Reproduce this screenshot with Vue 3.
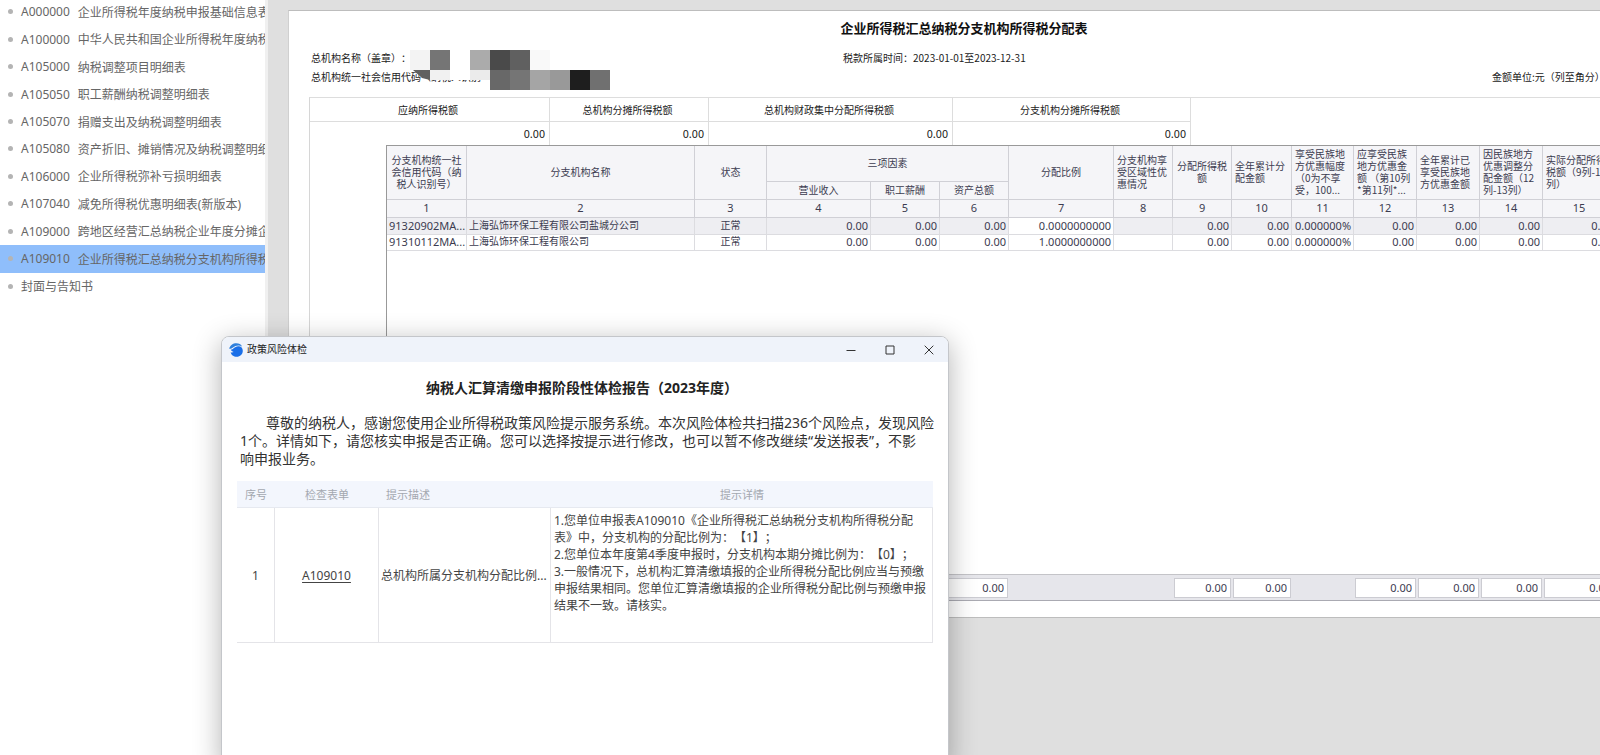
<script setup>
const forms = [
  { code: 'A000000', name: '企业所得税年度纳税申报基础信息表' },
  { code: 'A100000', name: '中华人民共和国企业所得税年度纳税申报表' },
  { code: 'A105000', name: '纳税调整项目明细表' },
  { code: 'A105050', name: '职工薪酬纳税调整明细表' },
  { code: 'A105070', name: '捐赠支出及纳税调整明细表' },
  { code: 'A105080', name: '资产折旧、摊销情况及纳税调整明细表' },
  { code: 'A106000', name: '企业所得税弥补亏损明细表' },
  { code: 'A107040', name: '减免所得税优惠明细表(新版本)' },
  { code: 'A109000', name: '跨地区经营汇总纳税企业年度分摊企业所得税' },
  { code: 'A109010', name: '企业所得税汇总纳税分支机构所得税分配表', active: true },
  { code: '', name: '封面与告知书' },
]

const mosaicTop = ['f3f3f3', '757575', 'ffffff', 'ababab', '4a4a4a', '606060', 'f9f9f9']
const mosaicBottom = ['606060', 'f1f1f1', 'ffffff', 'ebebeb', '686868', '757575', 'a5a5a5', '999999', '1e1e1e', '707070']

const summary = ['应纳所得税额', '总机构分摊所得税额', '总机构财政集中分配所得税额', '分支机构分摊所得税额']

const columns = [80, 228, 72, 104, 69, 69, 105, 59, 59, 60, 62, 63, 63, 63, 73]

const tailHeads = [
  { text: '分配比例' },
  { text: '分支机构享\n受区域性优\n惠情况', left: true },
  { text: '分配所得税\n额' },
  { text: '全年累计分\n配金额', left: true },
  { text: '享受民族地\n方优惠幅度\n（0为不享\n受，100...', left: true },
  { text: '应享受民族\n地方优惠金\n额 （第10列\n*第11列*...', left: true },
  { text: '全年累计已\n享受民族地\n方优惠金额', left: true },
  { text: '因民族地方\n优惠调整分\n配金额（12\n列-13列）', left: true },
  { text: '实际分配所得\n税额（9列-13\n列）', left: true },
]

const z = '0.00'
const rows = [
  ['91320902MA...', '上海弘饰环保工程有限公司盐城分公司', '正常', z, z, z, '0.0000000000', '', z, z, '0.000000%', z, z, z, z],
  ['91310112MA...', '上海弘饰环保工程有限公司', '正常', z, z, z, '1.0000000000', '', z, z, '0.000000%', z, z, z, z],
]

const totalled = [6, 9, 10, 12, 13, 14, 15]

const detail = [
  '1.您单位申报表A109010《企业所得税汇总纳税分支机构所得税分配',
  '表》中，分支机构的分配比例为：【1】；',
  '2.您单位本年度第4季度申报时，分支机构本期分摊比例为：【0】；',
  '3.一般情况下，总机构汇算清缴填报的企业所得税分配比例应当与预缴',
  '申报结果相同。您单位汇算清缴填报的企业所得税分配比例与预缴申报',
  '结果不一致。请核实。',
].join('\n')
</script>

<template>
  <div class="app">
    <nav class="sidebar">
      <ul class="forms">
        <li v-for="f in forms" :key="f.name" :class="{ active: f.active }">
          <a href="#" class="form-link">
            <span class="dot"></span>
            <span v-if="f.code" class="code">{{ f.code }}</span>
            <span>{{ f.name }}</span>
          </a>
        </li>
      </ul>
    </nav>

    <main class="workspace">
      <section class="sheet">
        <h1>企业所得税汇总纳税分支机构所得税分配表</h1>
        <div class="meta">
          <span>总机构名称（盖章）：</span>
          <span>税款所属时间：2023-01-01至2023-12-31</span>
          <span></span>
          <span class="taxcode">总机构统一社会信用代码（纳税人识别</span>
          <span></span>
          <span>金额单位:元（列至角分）</span>
          <div class="mosaic">
            <div class="mosaic-row">
              <i v-for="(c, i) in mosaicTop" :key="i" :style="{ background: '#' + c }"></i>
            </div>
            <div class="mosaic-row lower">
              <i v-for="(c, i) in mosaicBottom" :key="i" :style="{ background: '#' + c }"></i>
            </div>
          </div>
        </div>

        <div class="body">
          <table class="summary">
            <colgroup>
              <col class="s1" /><col class="s2" /><col class="s3" /><col class="s4" />
            </colgroup>
            <thead>
              <tr><th v-for="s in summary" :key="s">{{ s }}</th></tr>
            </thead>
            <tbody>
              <tr><td v-for="s in summary" :key="s">0.00</td></tr>
            </tbody>
          </table>

          <div class="grid">
            <table class="branches">
              <colgroup>
                <col v-for="(w, i) in columns" :key="i" :style="{ width: w + 'px' }" />
              </colgroup>
              <thead>
                <tr class="h-top">
                  <th rowspan="2">{{ '分支机构统一社\n会信用代码（纳\n税人识别号）' }}</th>
                  <th rowspan="2">分支机构名称</th>
                  <th rowspan="2">状态</th>
                  <th colspan="3">三项因素</th>
                  <th v-for="h in tailHeads" :key="h.text" rowspan="2" :class="{ left: h.left }">{{ h.text }}</th>
                </tr>
                <tr class="h-sub">
                  <th>营业收入</th>
                  <th>职工薪酬</th>
                  <th>资产总额</th>
                </tr>
                <tr class="h-num">
                  <th v-for="n in 15" :key="n">{{ n }}</th>
                </tr>
              </thead>
              <tbody>
                <tr v-for="(r, ri) in rows" :key="ri">
                  <td v-for="(v, i) in r" :key="i" :class="{ text: i < 2, mid: i === 2, editable: i === 6 }">{{ v }}</td>
                </tr>
              </tbody>
            </table>
            <div class="totals">
              <div v-for="(w, i) in columns" :key="i" class="total" :style="{ width: w + 'px' }">
                <input v-if="totalled.includes(i + 1)" type="text" value="0.00" readonly :aria-label="'合计 ' + (i + 1)" />
              </div>
            </div>
          </div>
        </div>
      </section>
    </main>

    <section class="dialog" role="dialog" aria-labelledby="dialog-title">
      <header class="titlebar">
        <svg class="logo" viewBox="0 0 14 14" aria-hidden="true">
          <path d="M0.2 5.800C1 2.300 4 0.300 7.400 0.300c2.600 0 4.600 1.200 5.700 3.200C9.800 1.900 6.500 2.500 4 4.600 2.900 5.500 1.500 6 0.200 5.800z" fill="#2f80dc" />
          <path d="M1.800 6.800C4.300 6.600 5.200 3.700 9.200 3.300c2.800-.2 4.600 1.700 4.600 4.500 0 3.500-2.700 6-6.100 6-3.100 0-5.600-1.900-6-4.600 1 .4 2 .3 2.900-.2C3.500 8.600 2.400 8 1.800 6.800z" fill="#1a6fe8" />
        </svg>
        <span id="dialog-title" class="caption">政策风险体检</span>
        <button type="button" aria-label="最小化">
          <svg viewBox="0 0 10 10"><path d="M0.500 5.500h9" /></svg>
        </button>
        <button type="button" aria-label="最大化">
          <svg viewBox="0 0 10 10"><path d="M1 1h8v8h-8z" /></svg>
        </button>
        <button type="button" aria-label="关闭">
          <svg viewBox="0 0 10 10"><path d="M0.700 0.700l8.600 8.600M9.300 0.700l-8.600 8.600" /></svg>
        </button>
      </header>
      <h2>纳税人汇算清缴申报阶段性体检报告（2023年度）</h2>
      <p class="intro">尊敬的纳税人，感谢您使用企业所得税政策风险提示服务系统。本次风险体检共扫描236个风险点，发现风险<br />1个。详情如下，请您核实申报是否正确。您可以选择按提示进行修改，也可以暂不修改继续“发送报表”，不影<br />响申报业务。</p>
      <table class="risks">
        <colgroup>
          <col class="r1" /><col class="r2" /><col class="r3" /><col />
        </colgroup>
        <thead>
          <tr><th>序号</th><th>检查表单</th><th class="desc">提示描述</th><th>提示详情</th></tr>
        </thead>
        <tbody>
          <tr>
            <td>1</td>
            <td><a href="#">A109010</a></td>
            <td class="desc">总机构所属分支机构分配比例...</td>
            <td class="detail">{{ detail }}</td>
          </tr>
        </tbody>
      </table>
    </section>
  </div>
</template>

<style>
body {
  margin: 0;
}
</style>

<style scoped>
.app {
  position: relative;
  display: flex;
  height: 100vh;
  overflow: hidden;
  background: #dfdfdf;
  color: #222;
  font-family: "Noto Sans", "Noto Sans CJK SC", sans-serif;
  font-size: 12px;
}

.sidebar {
  flex: none;
  width: 265px;
  overflow: hidden;
  background: #fff;
  border-right: 3px solid #f0f0f0;
}
.forms {
  display: grid;
  grid-template-rows: repeat(11, 1fr);
  height: 302px;
  margin: -2px 0 0;
  padding: 0;
  list-style: none;
}
.forms li {
  overflow: hidden;
}
.form-link {
  display: flex;
  align-items: center;
  height: 100%;
  padding-left: 8px;
  color: #666;
  text-decoration: none;
  white-space: nowrap;
}
.active {
  background: #8fbefb;
}
.dot {
  flex: none;
  width: 5px;
  height: 5px;
  margin-right: 8px;
  border-radius: 50%;
  background: #b4b4b4;
}
.code {
  margin-right: 8px;
}

.workspace {
  flex: 1;
  min-width: 0;
  overflow: hidden;
  padding: 10px 0 0 20px;
}
.sheet {
  margin-right: -40px;
  padding: 0 0 16px 20px;
  background: #fff;
  border: 1px solid #bdbdbd;
  border-left-color: #d0d0d0;
  font-family: "Noto Sans CJK SC", sans-serif;
}
h1 {
  margin: 0 20px 0 0;
  font-size: 13px;
  line-height: 34px;
  text-align: center;
  color: #111;
}
.meta {
  position: relative;
  display: grid;
  grid-template-columns: 532px 649px auto;
  grid-auto-rows: 19px;
  padding: 4px 0 10px 2px;
  font-size: 10px;
  line-height: 18px;
  white-space: nowrap;
  text-spacing-trim: space-all;
}
.mosaic {
  position: absolute;
  top: 5px;
  left: 101px;
}
.mosaic-row {
  display: flex;
}
.mosaic-row i {
  width: 20px;
  height: 20px;
}
.lower i:nth-child(-n + 4) {
  height: 10px;
}
.lower i:first-child {
  clip-path: polygon(15% 0, 100% 0, 100% 100%, 60% 80%);
}

.body {
  border-top: 1px solid #ddd;
  border-left: 1px solid #d6d6d6;
}
table {
  table-layout: fixed;
  border-collapse: separate;
  border-spacing: 0;
}
th,
td {
  box-sizing: border-box;
  padding: 0;
  font-weight: normal;
}
.summary {
  width: 881px;
  font-size: 10px;
}
.s1 { width: 240px; }
.s2 { width: 159px; }
.s3 { width: 244px; }
.s4 { width: 238px; }
.summary th,
.summary td {
  height: 24px;
  border-right: 1px solid #ddd;
  line-height: 20px;
}
.summary th {
  padding-right: 3px;
  border-bottom: 1px solid #ddd;
}
.summary td {
  height: 23px;
  padding: 0 4px 2px 0;
  font-size: 11px;
  text-align: right;
}

.grid {
  display: flex;
  flex-direction: column;
  min-height: 456px;
  margin-left: 76px;
  border-top: 1px solid #999;
  border-left: 1px solid #999;
  border-bottom: 1px solid #aaaab2;
  box-sizing: border-box;
}
.branches {
  width: 1229px;
  color: #3c3c50;
}
.branches th {
  padding-bottom: 2px;
  border-right: 1px solid #d0d0d6;
  border-bottom: 1px solid #d0d0d6;
  background: #f5f5f8;
  font-size: 10px;
  line-height: 12px;
  white-space: pre;
}
.branches th.left {
  padding-left: 3px;
  text-align: left;
}
.h-top th { height: 36px; }
.h-sub th { height: 18px; }
.branches .h-num th {
  height: 18px;
  font-family: "Noto Sans", sans-serif;
  font-size: 11px;
}
.branches td {
  height: 16px;
  padding: 0 2px 2px;
  border-right: 1px solid #dcdce0;
  border-bottom: 1px solid #dcdce0;
  font-family: "Noto Sans", "Noto Sans CJK SC", sans-serif;
  font-size: 11px;
  line-height: 13px;
  text-align: right;
  white-space: nowrap;
}
.branches tbody tr:first-child td {
  height: 17px;
  background: #eeeef2;
}
.branches tbody tr:first-child td.editable {
  background: #fff;
}
.branches td.text,
.branches td.mid {
  font-size: 10px;
}
.branches td.text {
  text-align: left;
}
.branches td.text:first-child {
  padding-right: 0;
  font-size: 11px;
}
.branches td.mid {
  text-align: center;
}
.totals {
  display: flex;
  height: 26px;
  box-sizing: border-box;
  margin-top: auto;
  border-top: 1px solid #c4c4c8;
  background: #e6e6eb;
}
.total {
  flex: none;
  box-sizing: border-box;
  padding: 3px 1px 2px;
}
.total input {
  display: block;
  box-sizing: border-box;
  width: 100%;
  height: 20px;
  padding: 0 3px 2px;
  border: 1px solid #ccccd2;
  background: #fff;
  color: #3c3c50;
  font-family: "Noto Sans", sans-serif;
  font-size: 11px;
  text-align: right;
}

.dialog {
  position: absolute;
  top: 336px;
  bottom: -12px;
  left: 221px;
  box-sizing: border-box;
  width: 728px;
  border: 1px solid #c4c6ca;
  border-radius: 8px;
  background: #fff;
  box-shadow: 0 6px 28px rgba(0, 0, 0, 0.3);
  overflow: hidden;
}
.titlebar {
  display: flex;
  align-items: center;
  height: 25px;
  padding-left: 7px;
  background: #eff3fa;
}
.logo {
  width: 14px;
  height: 14px;
  margin-right: 4px;
}
.caption {
  flex: 1;
  padding-bottom: 2px;
  font-size: 10px;
}
.titlebar button {
  display: flex;
  align-items: center;
  justify-content: center;
  width: 39px;
  height: 24px;
  padding: 0;
  border: 0;
  background: none;
}
.titlebar button svg {
  width: 10px;
  height: 10px;
  fill: none;
  stroke: #333;
}
h2 {
  margin: 16px 6px 0 0;
  font-size: 14px;
  line-height: 20px;
  text-align: center;
  color: #222;
}
.intro {
  margin: 16px 0 13px 18px;
  font-size: 14px;
  line-height: 18px;
  text-indent: 26px;
  white-space: nowrap;
  color: #333;
}
.risks {
  width: 696px;
  margin-left: 15px;
  color: #444;
}
.r1 { width: 38px; }
.r2 { width: 104px; }
.r3 { width: 172px; }
.risks th {
  height: 27px;
  border-bottom: 1px solid #e6e9f0;
  background: #f3f6fd;
  color: #a4a8b0;
  font-size: 11px;
}
.risks td {
  height: 135px;
  border-right: 1px solid #e4e4e8;
  border-bottom: 1px solid #e4e4e8;
  text-align: center;
}
.risks a {
  color: #444;
  text-underline-offset: 2px;
}
.risks th.desc {
  padding-left: 7px;
  text-align: left;
}
.risks td.desc {
  padding-left: 2px;
  text-align: left;
  white-space: nowrap;
}
.risks td.detail {
  padding: 4px 0 0 3px;
  line-height: 17px;
  text-align: left;
  vertical-align: top;
  white-space: pre;
  text-spacing-trim: space-all;
}
</style>
